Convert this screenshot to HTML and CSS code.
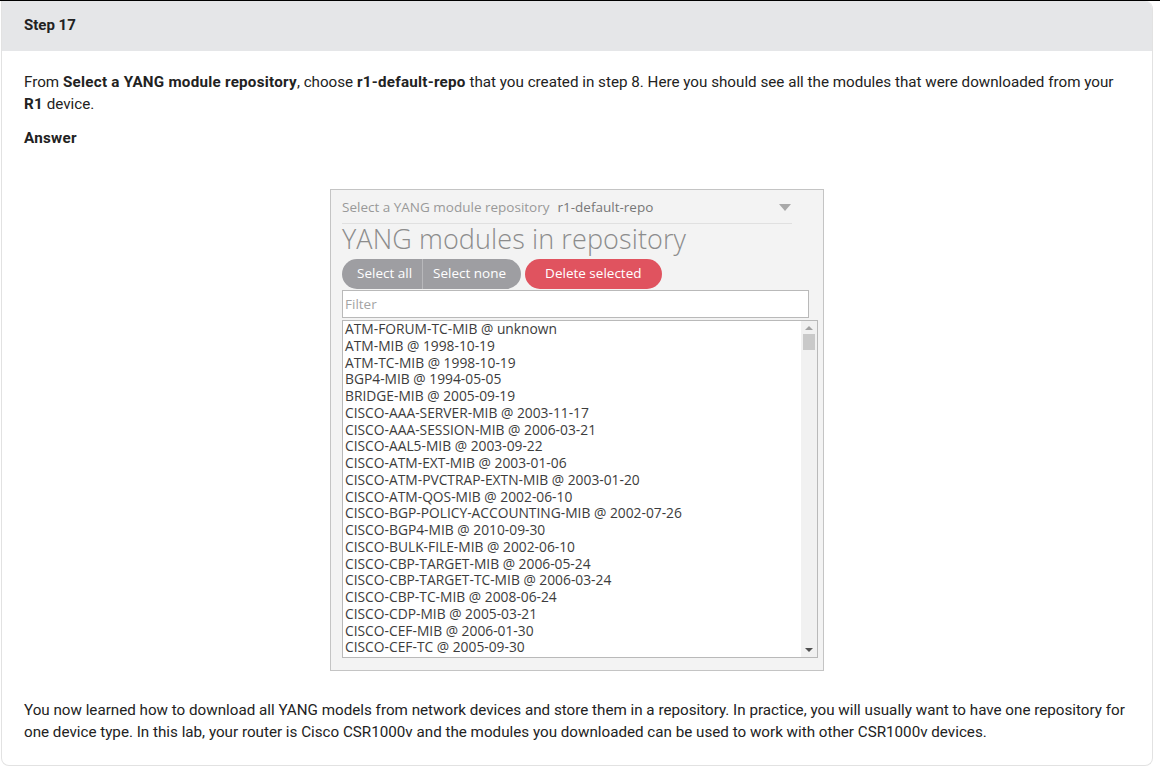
FILE: index.html
```html
<!DOCTYPE html>
<html lang="en">

<head>
    <meta charset="UTF-8">
    <meta name="viewport" content="width=device-width, initial-scale=1.0">
    <title>Step 17</title>
    <link rel="stylesheet" href="styles.css">
</head>

<body>
    <div class="step-card">
        <div class="step-head">Step 17</div>
        <div class="step-body">
            <p>From <b>Select a YANG module repository</b>, choose <b>r1-default-repo</b> that you created in step 8. Here you should see all the modules that were downloaded from your <b>R1</b> device.</p>
            <p class="answer"><b>Answer</b></p>

            <!-- repository browser -->
            <div class="shot">
                <div class="repo-select">
                    <span class="repo-label">Select a YANG module repository</span>
                    <span class="repo-value">r1-default-repo</span>
                    <span class="repo-caret"></span>
                </div>
                <h2 class="repo-title">YANG modules in repository</h2>
                <div class="repo-actions">
                    <div class="btn-group">
                        <span class="btn-grey">Select all</span>
                        <span class="btn-grey">Select none</span>
                    </div>
                    <span class="btn-red">Delete selected</span>
                </div>
                <div class="filter">Filter</div>
                <div class="module-list">
                    <ul>
                        <li>ATM-FORUM-TC-MIB @ unknown</li>
                        <li>ATM-MIB @ 1998-10-19</li>
                        <li>ATM-TC-MIB @ 1998-10-19</li>
                        <li>BGP4-MIB @ 1994-05-05</li>
                        <li>BRIDGE-MIB @ 2005-09-19</li>
                        <li>CISCO-AAA-SERVER-MIB @ 2003-11-17</li>
                        <li>CISCO-AAA-SESSION-MIB @ 2006-03-21</li>
                        <li>CISCO-AAL5-MIB @ 2003-09-22</li>
                        <li>CISCO-ATM-EXT-MIB @ 2003-01-06</li>
                        <li>CISCO-ATM-PVCTRAP-EXTN-MIB @ 2003-01-20</li>
                        <li>CISCO-ATM-QOS-MIB @ 2002-06-10</li>
                        <li>CISCO-BGP-POLICY-ACCOUNTING-MIB @ 2002-07-26</li>
                        <li>CISCO-BGP4-MIB @ 2010-09-30</li>
                        <li>CISCO-BULK-FILE-MIB @ 2002-06-10</li>
                        <li>CISCO-CBP-TARGET-MIB @ 2006-05-24</li>
                        <li>CISCO-CBP-TARGET-TC-MIB @ 2006-03-24</li>
                        <li>CISCO-CBP-TC-MIB @ 2008-06-24</li>
                        <li>CISCO-CDP-MIB @ 2005-03-21</li>
                        <li>CISCO-CEF-MIB @ 2006-01-30</li>
                        <li>CISCO-CEF-TC @ 2005-09-30</li>
                    </ul>
                    <div class="scrollbar">
                        <span class="arrow-up"></span>
                        <span class="thumb"></span>
                        <span class="arrow-down"></span>
                    </div>
                </div>
            </div>

            <p class="outro">You now learned how to download all YANG models from network devices and store them in a repository. In practice, you will usually want to have one repository for one device type. In this lab, your router is Cisco CSR1000v and the modules you downloaded can be used to work with other CSR1000v devices.</p>
        </div>
    </div>
</body>

</html>
```

FILE: styles.css
```css
body {
    margin: 0;
    border-top: 1px solid #000;
    background: #fff;
    font-family: Roboto, "Liberation Sans", sans-serif;
    color: #222;
}

.step-card {
    width: 1150px;
    margin-left: 1px;
    border: 1px solid #e2e2e2;
    border-top: none;
    border-radius: 0 8px 8px 8px;
    overflow: hidden;
}

.step-head {
    background: #e5e6e8;
    height: 50px;
    line-height: 48px;
    padding-left: 22px;
    font-size: 15px;
    font-weight: bold;
    color: #222;
}

.step-body {
    padding: 20px 22px 22px;
    font-size: 15.2px;
    line-height: 22px;
}

.step-body p {
    margin: 0;
}

.step-body b {
    font-weight: bold;
    letter-spacing: 0.25px;
}

.answer {
    margin-top: 12px !important;
}

/* screenshot of the repository browser */
.shot {
    margin: 40px auto 28px;
    padding: 5px 5px 6px 11px;
    box-sizing: border-box;
    width: 494px;
    height: 482px;
    background: #f3f3f3;
    border: 1px solid #c4c4c4;
    font-family: "Open Sans", "Liberation Sans", sans-serif;
}

.repo-select {
    display: flex;
    align-items: center;
    width: 450px;
    height: 24px;
    padding-bottom: 4px;
    border-bottom: 1px solid #e0e0e0;
    font-size: 13.5px;
    color: #999;
}

.repo-value {
    margin-left: 8px;
    color: #777;
}

.repo-caret {
    margin-left: auto;
    margin-right: 1px;
    width: 0;
    height: 0;
    border-left: 6px solid transparent;
    border-right: 6px solid transparent;
    border-top: 7px solid #a9a9a9;
}

.repo-title {
    margin: 0;
    height: 35px;
    font-size: 27px;
    line-height: 30px;
    font-weight: 300;
    color: #8c8c8c;
    letter-spacing: 0.1px;
}

.repo-actions {
    display: flex;
    gap: 4px;
    height: 30px;
}

.btn-group {
    display: flex;
    background: #9e9ea2;
    border-radius: 15px;
    overflow: hidden;
}

.btn-grey,
.btn-red {
    line-height: 29px;
    font-size: 13.5px;
    color: #fff;
}

.btn-grey {
    padding: 0 10px 0 15px;
}

.btn-grey + .btn-grey {
    border-left: 1px solid #b8b8bb;
    padding: 0 15px 0 10px;
}

.btn-red {
    background: #e0535f;
    border-radius: 15px;
    padding: 0 20px;
    height: 30px;
}

.filter {
    margin-top: 1px;
    width: 467px;
    height: 28px;
    box-sizing: border-box;
    border: 1px solid #b9b9b9;
    background: #fff;
    padding-left: 2px;
    line-height: 26px;
    font-size: 13.5px;
    color: #a4a4a4;
}

.module-list {
    display: flex;
    margin-top: 2px;
    width: 476px;
    height: 338px;
    box-sizing: border-box;
    border: 1px solid #b9b9b9;
    background: #fff;
    overflow: hidden;
}

.module-list ul {
    flex: 1;
    margin: 0;
    padding: 0 0 0 2px;
    list-style: none;
    font-size: 13.8px;
    line-height: 16.75px;
    color: #3c3c3c;
}

.scrollbar {
    width: 16px;
    background: #f1f1f1;
    display: flex;
    flex-direction: column;
    align-items: center;
}

.arrow-up,
.arrow-down {
    width: 0;
    height: 0;
    border-left: 4px solid transparent;
    border-right: 4px solid transparent;
}

.arrow-up {
    margin-top: 5px;
    border-bottom: 4px solid #a3a3a3;
}

.thumb {
    margin-top: 4px;
    width: 12px;
    height: 16px;
    background: #c9c9c9;
}

.arrow-down {
    margin-top: auto;
    margin-bottom: 5px;
    border-top: 4px solid #505050;
}

.outro {
    color: #222;
}
```
